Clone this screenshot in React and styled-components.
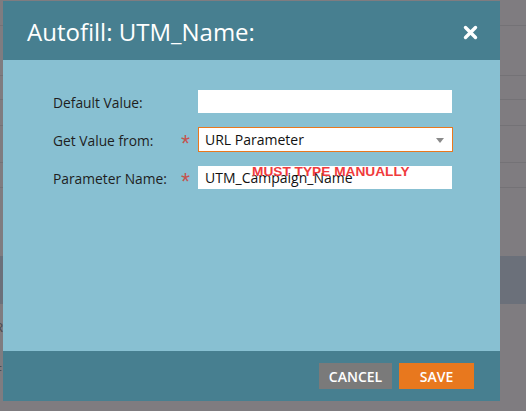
import React from "react";
import styled, { createGlobalStyle } from "styled-components";

const Global = createGlobalStyle`
  html, body { margin: 0; padding: 0; }
  body {
    background: #7f7c80;
    font-family: "Open Sans", "Noto Sans", sans-serif;
    width: 526px;
    height: 411px;
    overflow: hidden;
  }
`;

const Page = styled.div`
  position: relative;
  width: 526px;
  height: 411px;
  background: #7f7c80;
  display: flex;
  flex-direction: column;
`;

const BgRow = styled.div`
  height: ${(p) => p.h}px;
  flex: none;
  border-bottom: ${(p) => (p.line ? "1px solid #747276" : "none")};
  background: ${(p) => p.bg || "transparent"};
  color: #4e4c50;
  font-family: "Liberation Sans", Arial, sans-serif;
  font-size: 13px;
  display: flex;
  align-items: center;
  margin-left: -6px;
`;

const Dialog = styled.div`
  position: absolute;
  left: 3px;
  top: 1px;
  width: 497px;
  height: 400px;
  display: flex;
  flex-direction: column;
`;

const Header = styled.div`
  height: 59px;
  flex: none;
  background: #477f90;
  display: flex;
  align-items: center;
  justify-content: space-between;
  padding: 0 22px 0 24px;
  box-sizing: border-box;
`;

const Title = styled.h1`
  margin: 0;
  color: #fff;
  font-family: "Open Sans", sans-serif;
  font-weight: 400;
  font-size: 24px;
  padding-top: 2px;
`;

const Close = styled.button`
  border: 0;
  background: none;
  padding: 0;
  width: 16px;
  height: 16px;
  display: flex;
  align-items: center;
  justify-content: center;
  margin-top: 4px;
`;

const Body = styled.div`
  flex: 1;
  background: #88c0d2;
  padding: 29px 0 0 50px;
  box-sizing: border-box;
`;

const Form = styled.div`
  display: grid;
  grid-template-columns: 128px 17px 255px;
  grid-auto-rows: 25px;
  row-gap: 13px;
  align-items: center;
`;

const Label = styled.label`
  font-size: 13.8px;
  color: #1e1e1e;
  padding-top: 1px;
`;

const Star = styled.span`
  color: #c4544f;
  font-size: 23px;
  line-height: 1;
  padding-top: 9px;
  font-family: "Liberation Sans", Arial, sans-serif;
`;

const Field = styled.div`
  position: relative;
  height: ${(p) => (p.select ? 25 : 23)}px;
  width: ${(p) => (p.select ? 255 : 254)}px;
  box-sizing: border-box;
  background: #fff;
  border: ${(p) => (p.select ? "1px solid #e8781e" : "none")};
  display: flex;
  align-items: center;
  padding-left: ${(p) => (p.select ? 6 : 7)}px;
  font-size: 14px;
  color: #111;
`;

const Caret = styled.span`
  position: absolute;
  right: 8px;
  top: 10px;
  width: 0;
  height: 0;
  border-left: 4px solid transparent;
  border-right: 4px solid transparent;
  border-top: 5px solid #8a8a8a;
`;

const Note = styled.span`
  position: absolute;
  left: 54px;
  top: -2px;
  color: #f03a3c;
  font-family: "Liberation Sans", Arial, sans-serif;
  font-weight: 700;
  font-size: 13.7px;
  white-space: nowrap;
`;

const Footer = styled.div`
  height: 50px;
  flex: none;
  background: #477f90;
  display: flex;
  justify-content: flex-end;
  align-items: flex-start;
  gap: 7px;
  padding: 12px 26px 0 0;
  box-sizing: border-box;
`;

const Btn = styled.button`
  height: 26px;
  width: ${(p) => p.w}px;
  border: 0;
  background: ${(p) => p.bg};
  color: #fff;
  font-family: "Open Sans", sans-serif;
  font-weight: 600;
  font-size: 14px;
  padding: 0;
  display: flex;
  align-items: center;
  justify-content: center;
`;

export default function App() {
  return (
    <>
      <Global />
      <Page>
        <BgRow h={25} line />
        <BgRow h={49} line />
        <BgRow h={23} line />
        <BgRow h={25} line />
        <BgRow h={36} line />
        <BgRow h={24} line />
        <BgRow h={68}>t</BgRow>
        <BgRow h={48} bg="#6b707a">r</BgRow>
        <BgRow h={46}>R</BgRow>
        <BgRow h={40}>F</BgRow>
        <Dialog>
          <Header>
            <Title>Autofill: UTM_Name:</Title>
            <Close aria-label="close">
              <svg width="15" height="15" viewBox="0 0 15 15">
                <path d="M2.5 2.5 L12.5 12.5 M12.5 2.5 L2.5 12.5" stroke="#fff" strokeWidth="3.4" strokeLinecap="round" />
              </svg>
            </Close>
          </Header>
          <Body>
            <Form>
              <Label>Default Value:</Label>
              <span />
              <Field />
              <Label>Get Value from:</Label>
              <Star>*</Star>
              <Field select>
                URL Parameter
                <Caret />
              </Field>
              <Label>Parameter Name:</Label>
              <Star>*</Star>
              <Field>
                UTM_Campaign_Name
                <Note>MUST TYPE MANUALLY</Note>
              </Field>
            </Form>
          </Body>
          <Footer>
            <Btn w={73} bg="#7a7a7a">CANCEL</Btn>
            <Btn w={75} bg="#e8781e">SAVE</Btn>
          </Footer>
        </Dialog>
      </Page>
    </>
  );
}
